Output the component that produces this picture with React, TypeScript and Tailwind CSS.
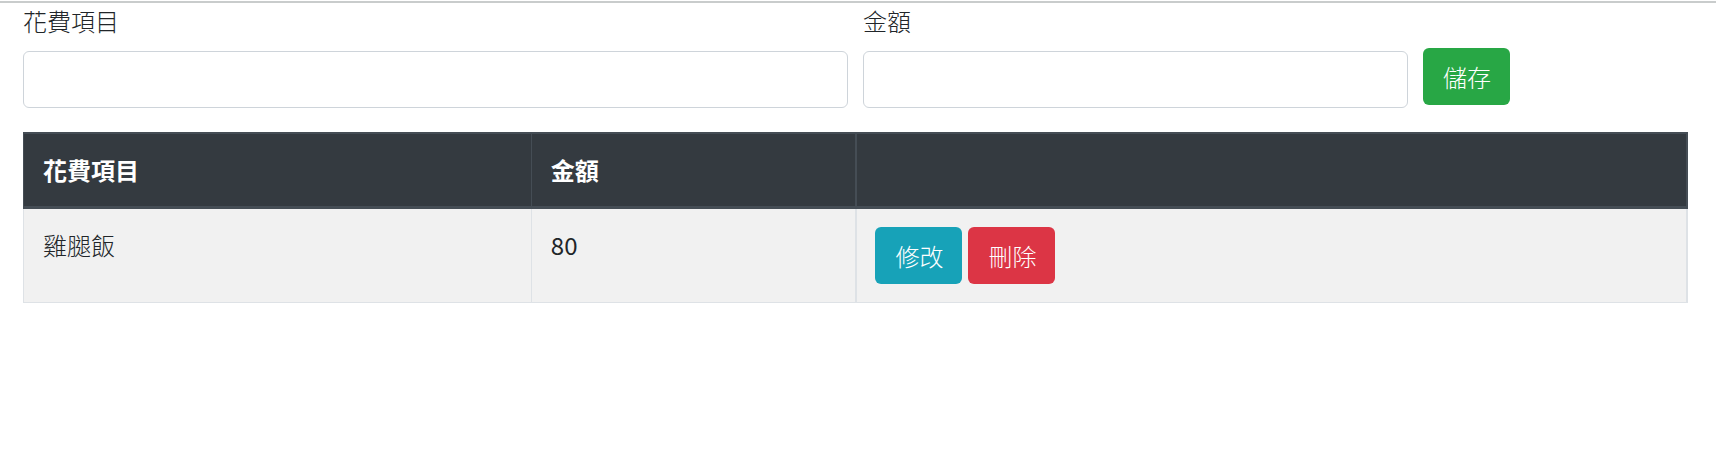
import type { ReactNode } from "react";

const expenses = [{ name: "雞腿飯", amount: 80 }];

function Field({ id, label, className }: { id: string; label: string; className: string }) {
  return (
    <div className={className}>
      <label htmlFor={id} className="mb-3 block">
        {label}
      </label>
      <input
        id={id}
        type="text"
        className="block h-[57px] w-full rounded-md border border-[#ced4da] bg-white px-[18px] text-[#495057]"
      />
    </div>
  );
}

function Button({ color, children }: { color: string; children: ReactNode }) {
  return (
    <button type="button" className={`h-[57px] rounded-md pr-[19px] pl-5 text-white ${color}`}>
      {children}
    </button>
  );
}

export default function App() {
  return (
    <div className="bg-white pt-px font-['Noto_Sans_CJK_TC',sans-serif] text-2xl leading-9 font-light text-[#212529]">
      <hr className="border-t-2 border-[#c9cccc]" />
      <main className="pr-7 pl-[23px]">
        <form className="mb-6 grid grid-cols-12 gap-[15px]">
          <Field id="item" label="花費項目" className="col-span-6" />
          <Field id="amount" label="金額" className="col-span-4" />
          <div className="col-span-2 pt-[45px]">
            <Button color="bg-[#28a745]">儲存</Button>
          </div>
        </form>
        <table className="w-full table-fixed border-separate border-spacing-0 text-left">
          <thead className="bg-[#343a40] font-bold text-white">
            <tr>
              <th className="w-[30.5%] border-t-2 border-b-3 border-l border-[#454d55] px-[19px] py-[18px]">花費項目</th>
              <th className="w-[19.5%] border-t-2 border-b-3 border-l border-[#454d55] px-[19px] py-[18px]">金額</th>
              <th aria-label="操作" className="border-x-2 border-t-2 border-b-3 border-[#454d55] p-[18px]"></th>
            </tr>
          </thead>
          <tbody className="bg-[#f1f1f1]">
            {expenses.map((expense) => (
              <tr key={expense.name} className="align-top">
                <td className="border-b border-l border-[#dee2e6] px-[19px] py-[18px]">{expense.name}</td>
                <td className="border-b border-l border-[#dee2e6] px-[19px] py-[18px] font-normal">{expense.amount}</td>
                <td className="border-x-2 border-b border-[#dee2e6] p-[18px]">
                  <div className="flex gap-1.5">
                    <Button color="bg-[#17a2b8]">修改</Button>
                    <Button color="bg-[#dc3545]">刪除</Button>
                  </div>
                </td>
              </tr>
            ))}
          </tbody>
        </table>
      </main>
    </div>
  );
}
